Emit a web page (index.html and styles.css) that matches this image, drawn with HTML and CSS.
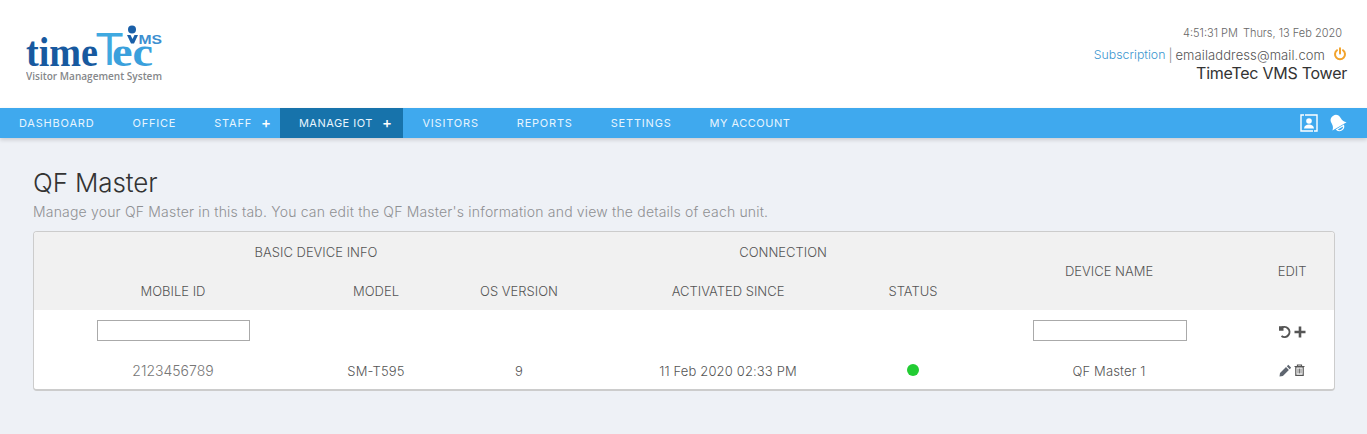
FILE: index.html
```html
<!DOCTYPE html>
<html lang="en">
<head>
<meta charset="utf-8">
<title>QF Master</title>
<link rel="stylesheet" href="styles.css">
</head>
<body>
<header class="top">
  <svg class="logo" width="140" height="60" viewBox="26 24 140 60" role="img" aria-label="TimeTec VMS">
    <text class="lg-serif" x="26" y="66" textLength="72" lengthAdjust="spacingAndGlyphs" fill="#17599f">time</text>
    <text class="lg-t" x="95.500" y="65" textLength="28" lengthAdjust="spacingAndGlyphs" fill="#3fa9e0">T</text>
    <text class="lg-serif" x="112" y="66" textLength="41" lengthAdjust="spacingAndGlyphs" fill="#3aa0dc">ec</text>
    <circle cx="132" cy="29.500" r="4" fill="#1a5fa8"/>
    <path d="M127 35h3.500l2 4 2-4h3.500l-4 8.500h-3z" fill="#1a5fa8"/>
    <text class="lg-ms" x="138.500" y="44" textLength="23.500" lengthAdjust="spacingAndGlyphs" fill="#3d8fd0">MS</text>
    <text class="lg-sub" x="26" y="80" textLength="136" lengthAdjust="spacingAndGlyphs" fill="#85878a">Visitor Management System</text>
  </svg>
  <div class="account">
    <div class="clock"><span>4:51:31 PM</span><span class="date">Thurs, 13 Feb 2020</span></div>
    <div class="user"><a class="sub-link">Subscription</a><span class="sep">|</span><span class="email">emailaddress@mail.com</span>
      <svg class="power" width="14" height="14" viewBox="0 0 14 14" fill="none" stroke="#f2a32c" stroke-width="2" stroke-linecap="round"><path d="M7 1.200V6.500"/><path d="M4 3.200a5 5 0 1 0 6 0"/></svg>
    </div>
    <div class="tower">TimeTec VMS Tower</div>
  </div>
</header>
<nav class="nav">
  <ul class="menu">
    <li class="item">DASHBOARD</li>
    <li class="item">OFFICE</li>
    <li class="item has-plus">STAFF<span class="plus">+</span></li>
    <li class="item has-plus active tight">MANAGE IOT<span class="plus">+</span></li>
    <li class="item">VISITORS</li>
    <li class="item">REPORTS</li>
    <li class="item">SETTINGS</li>
    <li class="item tight">MY ACCOUNT</li>
  </ul>
  <div class="nav-icons">
    <svg width="18" height="18" viewBox="0 0 18 18" fill="none"><path d="M4 1H1v16h12M14 17h3V1H5" stroke="#fff" stroke-width="1.400"/><circle cx="9" cy="7" r="2.800" fill="#fff"/><path d="M4 14.500c.4-3 2.400-4 5-4s4.600 1 5 4z" fill="#fff"/></svg>
    <svg width="19" height="20" viewBox="0 0 19 20"><g transform="rotate(-30 9.500 10)"><path d="M9.500 1.500c-3.400 0-5.200 2.500-5.200 5.500 0 3.600-1 5.300-3 7h16.400c-2-1.700-3-3.400-3-7 0-3-1.800-5.500-5.200-5.500z" fill="#fff"/><path d="M5.500 15.200c.6 2 2.200 3 4 3s3.400-1 4-3z" fill="none" stroke="#fff" stroke-width="1.200"/></g></svg>
  </div>
</nav>
<main class="page">
  <h1 class="title">QF Master</h1>
  <p class="subtitle">Manage your QF Master in this tab. You can edit the QF Master's information and view the details of each unit.</p>
  <div class="card">
    <table class="grid">
      <colgroup>
        <col class="c1"><col class="c2"><col class="c3"><col class="c4"><col class="c5"><col class="c6"><col class="c7">
      </colgroup>
      <thead>
        <tr class="head-a">
          <th colspan="3">BASIC DEVICE INFO</th>
          <th colspan="2">CONNECTION</th>
          <th rowspan="2">DEVICE NAME</th>
          <th rowspan="2">EDIT</th>
        </tr>
        <tr class="head-b">
          <th>MOBILE ID</th><th>MODEL</th><th>OS VERSION</th><th>ACTIVATED SINCE</th><th>STATUS</th>
        </tr>
      </thead>
      <tbody>
        <tr class="filter">
          <td><input class="box" type="text" aria-label="Mobile ID"></td>
          <td></td><td></td><td></td><td></td>
          <td><input class="box box-wide" type="text" aria-label="Device name"></td>
          <td>
            <span class="icons">
              <svg width="14" height="14" viewBox="0 0 14 14" fill="none" stroke="#555" stroke-width="2"><path d="M3.200 3.200A5 5 0 1 1 3.500 11"/><path d="M1 1.200h4.500v4.500H1z" fill="#555" stroke="none"/></svg>
              <svg width="12" height="12" viewBox="0 0 12 12"><path d="M0.500 4.700h4.200V.5h2.600v4.200h4.200v2.600H7.300v4.200H4.700V7.300H.5z" fill="#555"/></svg>
            </span>
          </td>
        </tr>
        <tr class="row">
          <td class="id">2123456789</td>
          <td>SM-T595</td>
          <td>9</td>
          <td>11 Feb 2020 02:33 PM</td>
          <td><span class="dot"></span></td>
          <td>QF Master 1</td>
          <td>
            <span class="icons row-icons">
              <svg width="13" height="13" viewBox="0 0 13 13"><path d="M9.300.8l2.900 2.900-1.500 1.500-2.900-2.900zM7 3.100L9.900 6l-6 6L.5 12.500 1 9.100z" fill="#5f6670"/></svg>
              <svg width="11" height="12" viewBox="0 0 11 12" fill="none" stroke="#555"><path d="M.5 2.500h10M3.500 2.500V1h4v1.500" stroke-width="1.200"/><path d="M1.800 2.800h7.400V11.400H1.800z" stroke-width="1.200"/><path d="M4 4.500v5M5.500 4.500v5M7 4.500v5" stroke-width=".8"/></svg>
            </span>
          </td>
        </tr>
      </tbody>
    </table>
  </div>
</main>
</body>
</html>
```
FILE: styles.css
```css
* { box-sizing: border-box; }
html, body { margin: 0; padding: 0; }
body {
  height: 434px;
  overflow: hidden;
  background: #eef1f6;
  font-family: Inter, "Liberation Sans", sans-serif;
  font-weight: 300;
  color: #555;
}
.top {
  height: 108px;
  background: #fff;
  display: flex;
  justify-content: space-between;
  padding: 0 20px 0 26px;
}
.logo { display: block; margin-top: 24px; }
.lg-serif { font: 700 42px "Liberation Serif", serif; }
.lg-t { font: 400 46px "Liberation Sans", sans-serif; }
.lg-ms { font: 700 12px "Liberation Sans", sans-serif; }
.lg-sub { font: 600 10px "Open Sans", sans-serif; }
.account {
  display: flex; flex-direction: column; align-items: flex-end;
  padding-top: 26px;
}
.clock { font-size: 11px; line-height: 14px; color: #666; padding-right: 5px; }
.date { margin-left: 5px; }
.user { font-size: 13px; line-height: 16px; margin-top: 7px; color: #555; display: flex; align-items: center; }
.sub-link { color: #3a96cf; font-size: 12.300px; }
.sep { margin: 0 3px; color: #888; }
.email { letter-spacing: .1px; }
.power { margin-left: 8px; margin-top: -3px; }
.tower { font-size: 16px; font-weight: 400; line-height: 20px; color: #333; letter-spacing: -.25px; }
.nav {
  height: 30px;
  background: #3fa9ee;
  box-shadow: 0 2px 4px rgba(0,0,0,.15);
  display: flex; justify-content: space-between; align-items: stretch;
  padding-right: 20px;
}
.menu { display: flex; list-style: none; margin: 0; padding: 0; }
.item {
  font-size: 11px; font-weight: 400; letter-spacing: .8px; color: #e8f5fe;
  line-height: 30px; padding: 0 19px; white-space: nowrap;
}
.tight { letter-spacing: .5px; }
.has-plus { padding-right: 8px; }
.item.active { background: #1773ab; padding-right: 11px; }
.plus { font-size: 15px; font-weight: 500; color: #fff; margin-left: 9px; vertical-align: -1px; }
.nav-icons { display: flex; align-items: center; gap: 10px; }
.page { padding: 30px 32px 0 33px; }
.title { margin: 0; font-size: 26px; font-weight: 300; line-height: 30px; color: #333; letter-spacing: -.1px; }
.subtitle { margin: 4px 0 0; font-size: 14px; line-height: 20px; color: #8e9093; letter-spacing: .185px; }
.card {
  margin-top: 9px;
  width: 1302px;
  height: 160px;
  background: #fff;
  border: 1px solid #ccc;
  border-width: 1px 1px 2px 1px;
  border-radius: 4px;
  overflow: hidden;
}
.grid { width: 1300px; border-collapse: collapse; table-layout: fixed; font-size: 13px; }
.c1 { width: 278px; } .c2 { width: 128px; } .c3 { width: 158px; } .c4 { width: 260px; }
.c5 { width: 110px; } .c6 { width: 282px; } .c7 { width: 84px; }
th { font-weight: 300; font-size: 13px; color: #555; background: #f1f1f1; text-align: center; padding: 0; }
.head-a { height: 40px; }
.head-b { height: 38px; }
td { padding: 0; text-align: center; color: #555; }
.filter { height: 41px; }
.row { height: 38px; }
.row td { padding-top: 1px; letter-spacing: .15px; }
.box { display: block; margin: 0 auto; width: 153px; height: 21px; border: 1px solid #aaa; background: #fff; padding: 0; }
.box-wide { width: 154px; margin-left: 65px; }
.id { font-size: 14px; color: #777; }
.row td.id { letter-spacing: 0; }
.dot { display: inline-block; width: 12px; height: 12px; border-radius: 50%; background: #22cc33; vertical-align: middle; margin-bottom: 3px; }
.icons { display: inline-flex; align-items: center; gap: 2px; vertical-align: middle; }
.row-icons { margin-bottom: 2px; }
```
